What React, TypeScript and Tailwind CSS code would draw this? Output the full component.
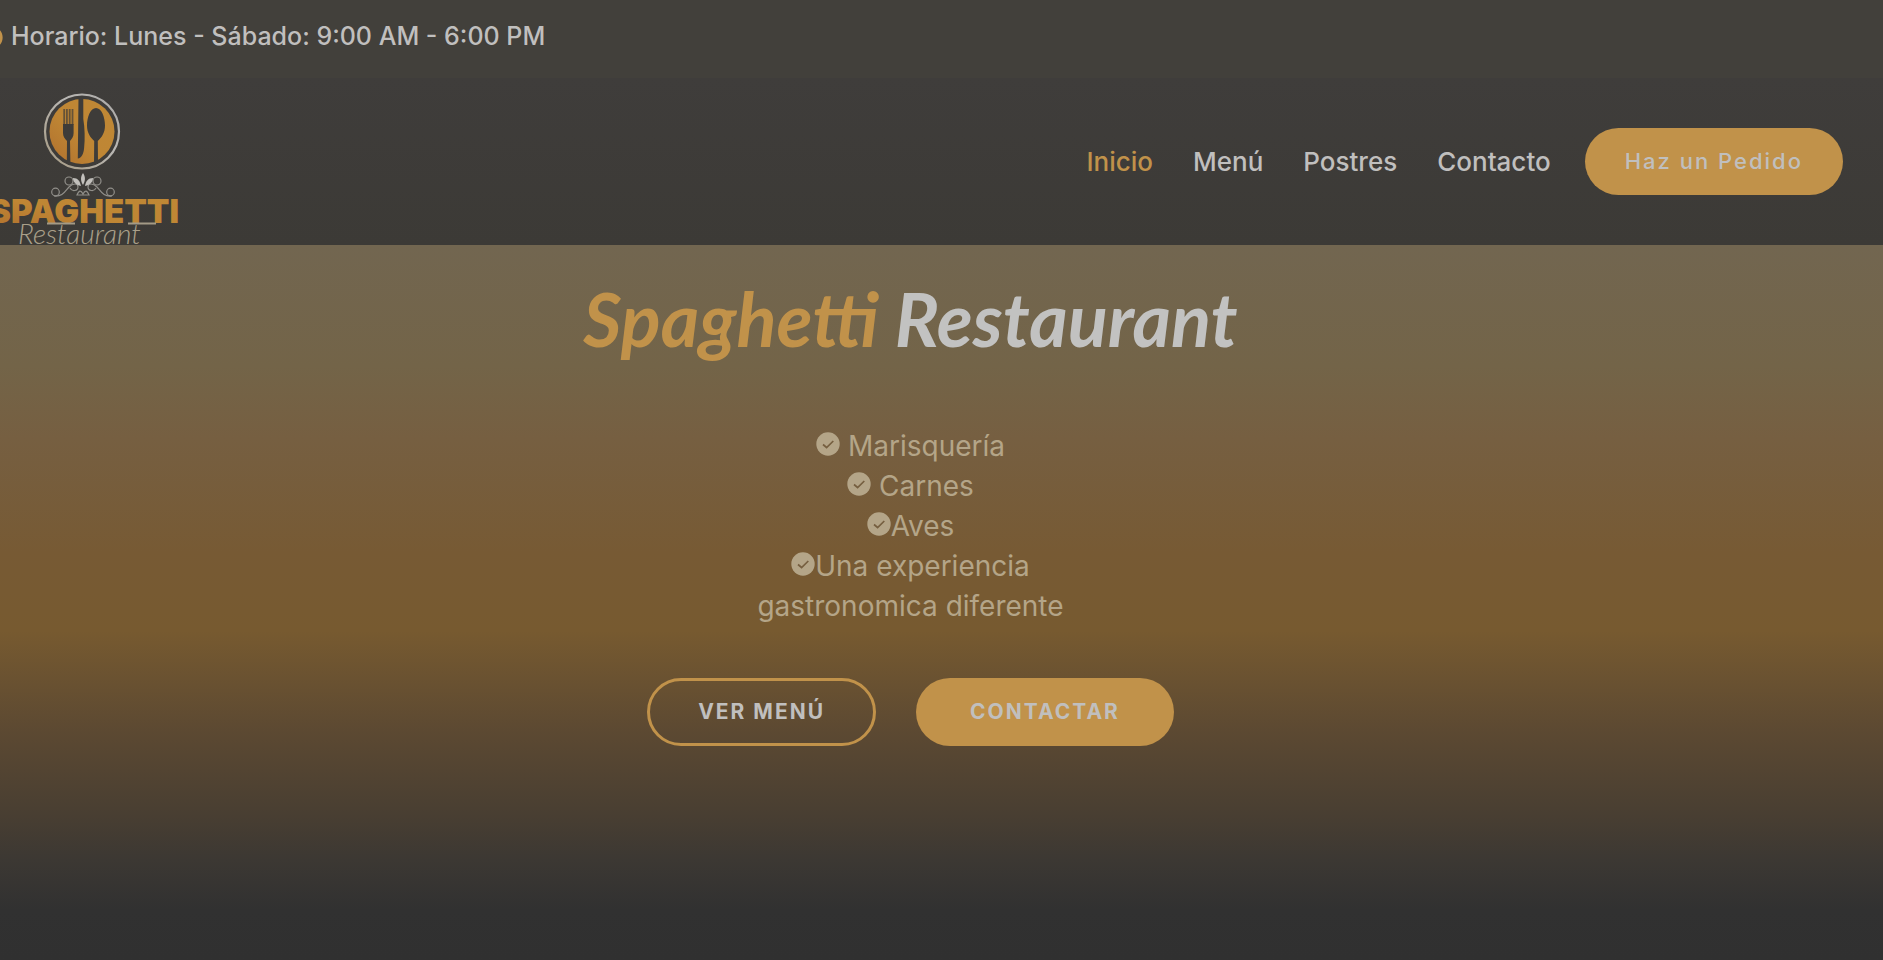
import { FaClock } from 'react-icons/fa';

const links = ['Inicio', 'Menú', 'Postres', 'Contacto'];

function Logo() {
  return (
    <svg
      viewBox="-12 90 196 162"
      className="block h-[162px] w-[196px]"
      role="img"
      aria-label="Spaghetti Restaurant"
    >
      <defs>
        <linearGradient id="gold" x1="0" y1="1" x2="1" y2="0">
          <stop offset="0" stopColor="#b0702e" />
          <stop offset="0.45" stopColor="#bf8634" />
          <stop offset="1" stopColor="#bf8835" />
        </linearGradient>
        <linearGradient id="ring" x1="0" y1="1" x2="1" y2="0">
          <stop offset="0" stopColor="#a69a82" />
          <stop offset="0.6" stopColor="#b9b7b4" />
          <stop offset="1" stopColor="#aaa8a6" />
        </linearGradient>
      </defs>
      <circle cx="82" cy="131.500" r="37" fill="none" stroke="url(#ring)" strokeWidth="2.200" />
      <circle cx="82" cy="131.500" r="32.500" fill="url(#gold)" />
      <g fill="#3e3c39">
        <path d="M78.500 97h4.800v22c1.500 9 1.800 20 .8 29-.5 6-2.500 10-6.300 10.500z" />
        <path d="M63 124h10.600v9c0 3.500-1.600 5.500-3.600 8l.4 23h-3.600l.2-23c-2.200-2.500-4-4.500-4-8z" />
        <path
          d="M63.300 109h1.800v16h-1.800zM66 109h1.800v16H66zM68.800 109h1.800v16h-1.800zM71.600 109h1.800v16h-1.800z"
          opacity="0.7"
        />
        <path d="M96 108c5.500 0 9 9 9 17.500 0 7-3.200 12-7.200 15.500l.2 23h-4l.2-23c-4-3.500-7.200-8.500-7.200-15.500 0-8.500 3.500-17.500 9-17.500z" />
      </g>
      <g fill="none" stroke="#918f8a" strokeWidth="1.200">
        <circle cx="55.500" cy="192" r="3.800" />
        <circle cx="110.500" cy="192" r="3.800" />
        <path d="M54 196c9 1 11-5 15-9s9-4 9 0-6 5-8 1M112 196c-9 1-11-5-15-9s-9-4-9 0 6 5 8 1" />
        <circle cx="69" cy="181" r="4" />
        <circle cx="97" cy="181" r="4" />
        <path d="M77 195c2-5 4-5 6-1 2-4 4-4 6 1z" />
      </g>
      <path
        d="M83 173c2.800 4 2.400 8 0 12-2.400-4-2.800-8 0-12zM73 178c5 0 7 3 8 8-5-1-8-4-8-8zM93 178c-5 0-7 3-8 8 5-1 8-4 8-8z"
        fill="#c2c0bc"
      />
      <text
        x="-11"
        y="223"
        fill="url(#gold)"
        className="font-['Inter',sans-serif] text-[33px] font-black"
      >
        SPAGHETTI
      </text>
      <text
        x="18"
        y="244"
        fill="#aaa08a"
        className="font-['Lato',sans-serif] text-[28px] font-light italic"
      >
        Restaurant
      </text>
      <path d="M47 223.500h28M128 223.500h28" stroke="#a39a86" strokeWidth="1.800" />
    </svg>
  );
}

function Check({ gap }: { gap?: boolean }) {
  return (
    <svg
      viewBox="0 0 24 24"
      className={gap ? 'mr-2 inline size-6 align-[0px]' : 'inline size-6 align-[0px]'}
      aria-hidden="true"
    >
      <circle cx="12" cy="12" r="11.700" fill="currentColor" />
      <path d="M7 12.500l3.600 3L17.300 9" fill="none" stroke="#765f40" strokeWidth="1.700" />
    </svg>
  );
}

function Item({ text, gap }: { text: string; gap?: boolean }) {
  return (
    <li>
      <Check gap={gap} />
      {text}
    </li>
  );
}

export default function App() {
  return (
    <div className="flex min-h-screen flex-col overflow-hidden bg-[#303030] font-['Inter',sans-serif] text-[#c0bfbe]">
      <div className="flex h-[78px] items-center gap-2 bg-[#42403b] pb-1 text-[25px] font-medium">
        <FaClock className="-ml-5 shrink-0 text-[#c1924a]" size={23} />
        <p>Horario: Lunes - Sábado: 9:00 AM - 6:00 PM</p>
      </div>

      <header className="z-10 flex h-[167px] items-center justify-between bg-linear-to-b from-[#3f3d3b] to-[#3c3a36] pr-10">
        <a href="#inicio" className="-ml-3 self-start pt-3">
          <Logo />
        </a>
        <div className="flex items-center gap-[34px]">
          <nav className="flex gap-10 text-[26px] font-medium">
            {links.map((link, i) => (
              <a key={link} href={'#' + link.toLowerCase()} className={i === 0 ? 'text-[#c1924a]' : ''}>
                {link}
              </a>
            ))}
          </nav>
          <button className="h-[67px] rounded-full bg-[#c1924a] px-10 text-[22px] font-medium tracking-[2px]">
            Haz un Pedido
          </button>
        </div>
      </header>

      <main className="flex grow flex-col items-center bg-[linear-gradient(180deg,#726650_0%,#736448_17%,#765f41_27%,#775a34_43%,#775a30_54%,#5c4932_68%,#483e32_80%,#3c3833_86%,#313131_93%,#303030_100%)] pr-[62px] pt-6">
        <h1 className="font-['Lato',sans-serif] text-[74px]/[100px] font-bold italic text-[#c2c2c1]">
          <span className="text-[#c1924a]">Spaghetti</span> Restaurant
        </h1>
        <ul className="mt-[57px] max-w-[360px] text-center text-[28px]/[40px] text-[#b4a588]">
          <Item text="Marisquería" gap />
          <Item text="Carnes" gap />
          <Item text="Aves" />
          <Item text="Una experiencia gastronomica diferente" />
        </ul>
        <div className="mt-[52px] flex gap-10 text-[21px] font-bold tracking-[2px]">
          <button className="h-[68px] rounded-full border-3 border-[#c1924a] px-12">VER MENÚ</button>
          <button className="h-[68px] rounded-full bg-[#c1924a] px-[54px]">CONTACTAR</button>
        </div>
      </main>
    </div>
  );
}
